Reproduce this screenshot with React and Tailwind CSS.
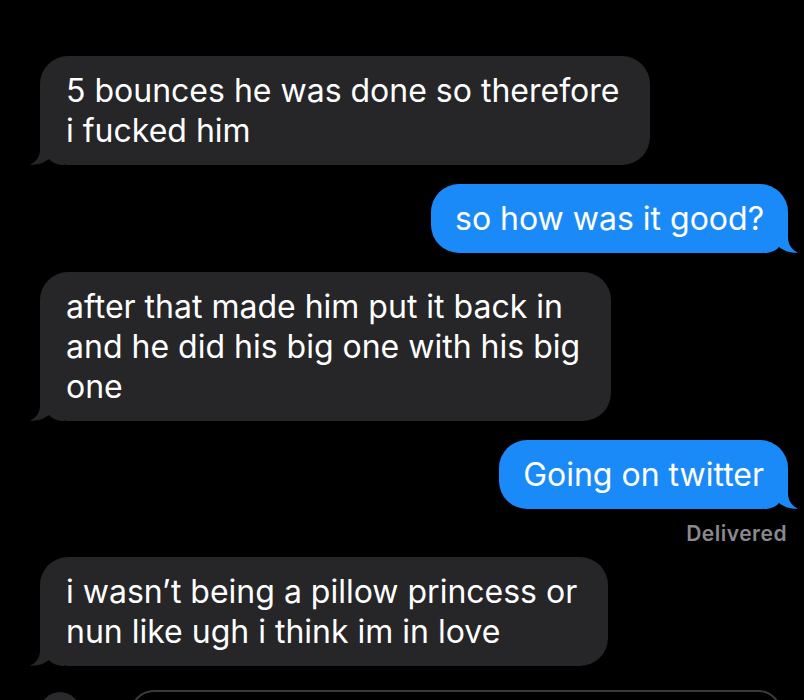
const font = { fontFamily: 'Inter, "Liberation Sans", sans-serif' }

function Tail({ color, side }) {
  return (
    <svg
      width="34"
      height="28"
      viewBox="0 0 34 28"
      className={
        side === 'left'
          ? 'absolute bottom-0 left-[-10px]'
          : 'absolute bottom-0 right-[-10px] scale-x-[-1]'
      }
    >
      <path
        d="M10,0 L10,12 C10,20 6,25 0,27.5 C7,28.5 14,26 19,22 C22,25.5 27,28 34,28 L34,0 Z"
        fill={color}
      />
    </svg>
  )
}

function Received({ lines }) {
  return (
    <div className="flex justify-start pl-10">
      <div className="relative rounded-[28px] bg-[#262628] py-[14.5px] pl-[26px] pr-[31px] text-[32px] leading-[40px] text-white whitespace-nowrap">
        <Tail color="#262628" side="left" />
        <div className="relative">
          {lines.map((l, i) => (
            <div key={i}>{l}</div>
          ))}
        </div>
      </div>
    </div>
  )
}

function Sent({ text }) {
  return (
    <div className="flex justify-end pr-4">
      <div className="relative rounded-[28px] bg-[#1b8af9] py-[14.5px] px-[24px] text-[32px] leading-[40px] text-white whitespace-nowrap">
        <Tail color="#1b8af9" side="right" />
        <div className="relative">{text}</div>
      </div>
    </div>
  )
}

export default function App() {
  return (
    <div className="h-[700px] w-[804px] overflow-hidden bg-black" style={font}>
      <div className="flex flex-col gap-[19px] pt-[56px]">
        <Received lines={['5 bounces he was done so therefore', 'i fucked him']} />
        <Sent text="so how was it good?" />
        <Received
          lines={[
            'after that made him put it back in',
            'and he did his big one with his big',
            'one',
          ]}
        />
        <div>
          <Sent text="Going on twitter" />
          <div className="mt-[13px] pr-[17px] text-right text-[21px] font-semibold leading-6 tracking-[0.5px] text-[#8a8a8e]">
            Delivered
          </div>
        </div>
        <div className="mt-[-8px]">
          <Received lines={['i wasn’t being a pillow princess or', 'nun like ugh i think im in love']} />
        </div>
        <div className="mt-[5px] flex items-start gap-[50px] pl-10 pr-[22px]">
          <div className="mt-[2px] h-10 w-10 shrink-0 rounded-full bg-[#2a2a2c]" />
          <div className="h-12 flex-1 rounded-full border-2 border-[#3a3a3c]" />
        </div>
      </div>
    </div>
  )
}
